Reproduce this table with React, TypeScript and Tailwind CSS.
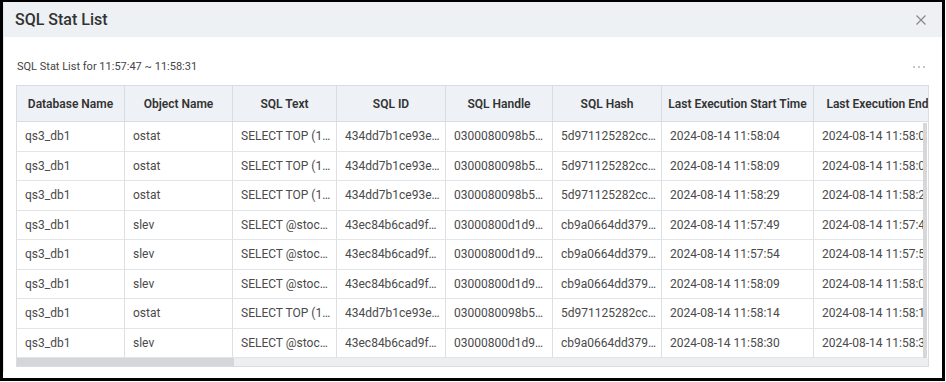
import React from "react";

type Row = {
    db: string;
    obj: string;
    text: string;
    id: string;
    handle: string;
    hash: string;
    start: string;
    end: string;
};

const columns = [
    { label: "Database Name", w: "w-[108px]" },
    { label: "Object Name", w: "w-[108px]" },
    { label: "SQL Text", w: "w-[104px]" },
    { label: "SQL ID", w: "w-[109px]" },
    { label: "SQL Handle", w: "w-[107px]" },
    { label: "SQL Hash", w: "w-[109px]" },
    { label: "Last Execution Start Time", w: "w-[152px]" },
    { label: "Last Execution End Time", w: "w-[158px]" },
];

const ostat = {
    db: "qs3_db1",
    obj: "ostat",
    text: "SELECT TOP (1…",
    id: "434dd7b1ce93e…",
    handle: "0300080098b5…",
    hash: "5d971125282cc…",
};

const slev = {
    db: "qs3_db1",
    obj: "slev",
    text: "SELECT @stoc…",
    id: "43ec84b6cad9f…",
    handle: "03000800d1d9…",
    hash: "cb9a0664dd379…",
};

const rows: Array<Row> = [
    { ...ostat, start: "2024-08-14 11:58:04", end: "2024-08-14 11:58:04" },
    { ...ostat, start: "2024-08-14 11:58:09", end: "2024-08-14 11:58:09" },
    { ...ostat, start: "2024-08-14 11:58:29", end: "2024-08-14 11:58:29" },
    { ...slev, start: "2024-08-14 11:57:49", end: "2024-08-14 11:57:49" },
    { ...slev, start: "2024-08-14 11:57:54", end: "2024-08-14 11:57:54" },
    { ...slev, start: "2024-08-14 11:58:09", end: "2024-08-14 11:58:09" },
    { ...ostat, start: "2024-08-14 11:58:14", end: "2024-08-14 11:58:14" },
    { ...slev, start: "2024-08-14 11:58:30", end: "2024-08-14 11:58:30" },
];

function Cell({ w, children }: { w: string; children: React.ReactNode }) {
    return (
        <div className={`${w} shrink-0 h-full flex items-center pl-2 pr-1 border-r border-[#dcdfe4] whitespace-nowrap overflow-hidden`}>
            {children}
        </div>
    );
}

export default function App() {
    return (
        <div className="w-[946px] h-[382px] bg-white" style={{ fontFamily: "Roboto, 'Liberation Sans', sans-serif" }}>
            <div className="w-[945px] h-[381px] border-l-[3px] border-t-2 border-r-[3px] border-b-[3px] border-black bg-white flex flex-col">
                {/* modal */}
                <div className="flex flex-col border-l border-[#e3e7ec]">
                    <div className="h-[35px] bg-[#eef1f4] flex items-center justify-between pl-[11px] pr-[16px]">
                        <span className="text-[16px] font-medium text-[#333]">SQL Stat List</span>
                        <svg width="10" height="10" viewBox="0 0 10 10">
                            <path d="M0.5 0.5 L9.5 9.5 M9.5 0.5 L0.5 9.5" stroke="#8a8a8a" strokeWidth="1.3" />
                        </svg>
                    </div>

                    <div className="px-[12px] pb-[5px]">
                        <div className="flex items-center justify-between h-[16px] mt-[22px] mb-[10px]">
                            <span className="text-[11px] text-[#444] pl-[1px]">SQL Stat List for 11:57:47 ~ 11:58:31</span>
                            <div className="flex gap-[3px] pr-[5px]">
                                <span className="w-[2px] h-[2px] rounded-full bg-[#b4b4b4]" />
                                <span className="w-[2px] h-[2px] rounded-full bg-[#b4b4b4]" />
                                <span className="w-[2px] h-[2px] rounded-full bg-[#b4b4b4]" />
                            </div>
                        </div>

                        <div className="w-[913px] border border-[#d9dde2] text-[12px]">
                            <div className="flex h-[36px] bg-[#eef1f5] border-b border-[#d9dde2] overflow-hidden font-semibold text-[#333]">
                                {columns.map((c) => (
                                    <div key={c.label} className={`${c.w} shrink-0 h-full flex items-center justify-center border-r border-[#d9dde2] whitespace-nowrap`}>
                                        {c.label}
                                    </div>
                                ))}
                            </div>

                            <div className="flex">
                                <div className="flex-1 overflow-hidden text-[#4a4a4a]">
                                    {rows.map((r, i) => (
                                        <div key={i} className="flex h-[29.5px] border-b border-[#e1e4e8]">
                                            <Cell w="w-[108px]">{r.db}</Cell>
                                            <Cell w="w-[108px]">{r.obj}</Cell>
                                            <Cell w="w-[104px]">{r.text}</Cell>
                                            <Cell w="w-[109px]">{r.id}</Cell>
                                            <Cell w="w-[107px]">{r.handle}</Cell>
                                            <Cell w="w-[109px]">{r.hash}</Cell>
                                            <Cell w="w-[152px]">{r.start}</Cell>
                                            <Cell w="w-[158px]">{r.end}</Cell>
                                        </div>
                                    ))}
                                </div>
                                <div className="w-[5px] shrink-0 bg-white pt-[1px]">
                                    <div className="w-[4px] h-full bg-[#d6d7d9]" />
                                </div>
                            </div>

                            <div className="h-[8px] bg-[#eceef0]">
                                <div className="w-[217px] h-full bg-[#d4d6d9]" />
                            </div>
                        </div>
                    </div>
                </div>
            </div>
        </div>
    );
}
